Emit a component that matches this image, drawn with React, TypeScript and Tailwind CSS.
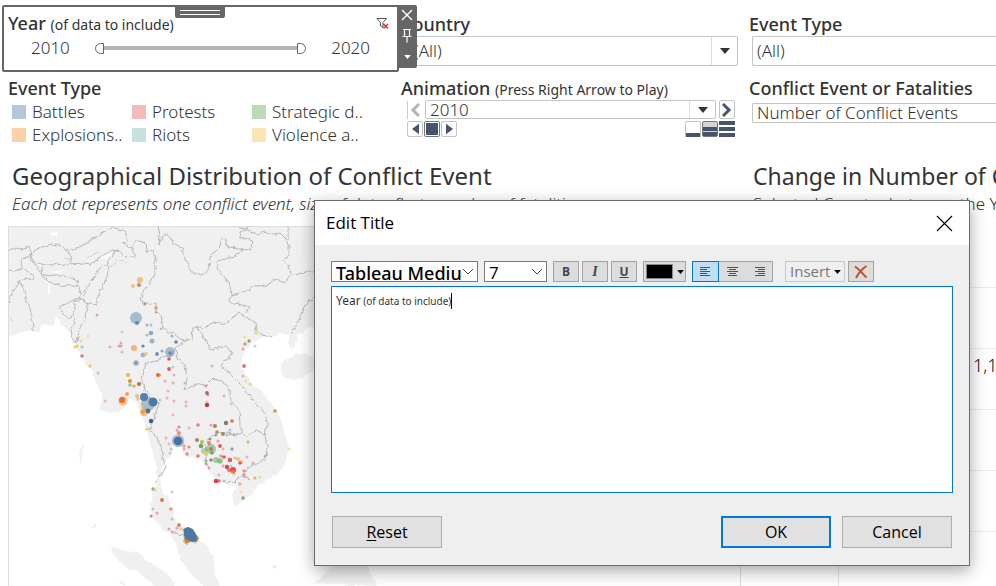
import type { ReactNode } from "react";

const heading = "h-6 font-medium text-[18px] leading-6 text-[#333] whitespace-nowrap";

type Dot = [number, number, number, string, number];

const BLUE = "#4e79a7";
const ORANGE = "#f28e2b";
const RED = "#e15759";
const CRIMSON = "#dd3237";
const TEAL = "#76b7b2";
const GREEN = "#59a14f";
const YELLOW = "#edc948";
const BROWN = "#9c6a2c";
const VERMILION = "#e8622c";

const dots: Dot[] = [
  [136, 318, 6, BLUE, 0.45], [137, 323, 2, BLUE, 0.8], [140, 280, 3, ORANGE, 0.5], [133, 286, 2, ORANGE, 0.5], [139, 285, 2, BROWN, 0.7],
  [145, 304, 1.5, BROWN, 0.6], [156, 308, 1.8, ORANGE, 0.8], [156, 312, 1.5, BLUE, 0.4], [97, 315, 1.5, RED, 0.5],
  [147, 325, 1.5, BLUE, 0.5], [151, 325, 1.5, BLUE, 0.4], [151, 333, 2.3, BLUE, 0.6], [147, 335, 1.6, GREEN, 0.5], [152, 341, 2.5, BLUE, 0.5],
  [161, 329, 1.3, GREEN, 0.5], [172, 336, 1.5, BLUE, 0.5], [176, 342, 1.8, BLUE, 0.9], [170, 352, 5, BLUE, 0.45], [170, 353, 1.7, BLUE, 0.8],
  [162, 351, 1.6, BLUE, 0.6], [157, 354, 1.9, BLUE, 0.8], [143, 346, 1.6, BLUE, 0.9], [143, 355, 2.4, BLUE, 0.5], [146, 354, 1.9, YELLOW, 0.7],
  [136, 363, 2.8, BLUE, 0.5], [136, 363, 1.5, "#8a7c78", 0.5], [134, 348, 3, ORANGE, 0.6], [122, 332, 1.6, ORANGE, 0.4], [110, 347, 1.6, RED, 0.4],
  [119, 346, 1.6, RED, 0.5], [121, 343, 1.5, RED, 0.5], [121, 346, 1.5, RED, 0.5], [122, 352, 1.6, RED, 0.4],
  [75, 347, 1.8, YELLOW, 0.8], [77, 346, 1.6, YELLOW, 0.8], [82, 347, 1.6, BLUE, 0.4], [88, 336, 1.5, YELLOW, 0.5], [81, 341, 1.5, YELLOW, 0.5],
  [82, 356, 1.8, "#a05577", 0.7], [90, 366, 1.7, YELLOW, 0.8], [98, 373, 1.5, RED, 0.4], [169, 359, 1.8, CRIMSON, 0.8], [173, 367, 1.5, TEAL, 0.5],
  [169, 369, 1.9, CRIMSON, 0.8], [174, 375, 1.5, RED, 0.4], [158, 375, 2, VERMILION, 1], [160, 375, 1.5, ORANGE, 0.7], [165, 381, 1.5, RED, 0.4],
  [173, 383, 1.6, RED, 0.4], [185, 383, 1.6, RED, 0.4], [128, 375, 2, "#e8a020", 0.8], [130, 381, 2, "#d08a18", 0.9], [130, 385, 1.7, GREEN, 0.6],
  [134, 386, 1.6, ORANGE, 0.8], [139, 384, 2, BROWN, 0.9], [127, 394, 2, ORANGE, 0.8], [123, 401, 4.5, ORANGE, 0.5], [122, 400, 3, VERMILION, 0.9],
  [105, 401, 1.5, RED, 0.4], [137, 396, 2, ORANGE, 0.5], [138, 399, 1.7, ORANGE, 0.5], [148, 404, 7, BLUE, 0.45], [144, 397, 4, BLUE, 0.95],
  [153, 402, 4.5, BLUE, 1], [144, 412, 4.3, ORANGE, 0.5], [143, 412, 2, ORANGE, 0.8], [148, 411, 2.4, "#47658f", 0.9], [142, 406, 1.5, YELLOW, 0.7],
  [151, 421, 2.2, "#33639b", 1], [160, 400, 1.5, GREEN, 0.4], [147, 429, 1.6, YELLOW, 0.9], [168, 391, 1.5, RED, 0.4], [167, 398, 1.5, RED, 0.4],
  [174, 401, 1.5, RED, 0.4], [186, 402, 1.5, RED, 0.4], [186, 406, 1.5, RED, 0.4], [173, 415, 1.5, RED, 0.4], [206, 386, 1.5, RED, 0.5],
  [207, 393, 1.9, "#8c5c6a", 0.9], [208, 395, 1.6, RED, 0.5], [207, 402, 1.6, ORANGE, 0.4], [207, 405, 2.2, "#bd2944", 0.95], [224, 396, 1.5, RED, 0.4],
  [212, 366, 1.6, GREEN, 0.4], [231, 404, 1.4, TEAL, 0.5], [198, 425, 1.8, RED, 0.7], [189, 428, 1.5, RED, 0.4], [179, 427, 1.6, "#a35c5c", 0.6],
  [177, 430, 1.5, RED, 0.5], [179, 433, 2, VERMILION, 0.7], [166, 438, 1.5, RED, 0.4], [178, 441, 6.2, BLUE, 0.45], [178, 441, 4.3, "#4472a5", 1],
  [169, 444, 1.5, RED, 0.4], [171, 449, 1.5, RED, 0.4], [170, 453, 1.5, TEAL, 0.5], [184, 446, 1.7, RED, 0.5], [184, 449, 1.5, RED, 0.5], [189, 447, 1.6, RED, 0.7],
  [187, 454, 1.7, RED, 0.7], [198, 456, 1.8, VERMILION, 0.8], [197, 440, 2, BROWN, 0.8], [202, 442, 2, "#a9a92c", 0.8], [201, 446, 2.3, GREEN, 0.9],
  [204, 451, 3, GREEN, 0.4], [211, 449, 5, GREEN, 0.5], [211, 449, 2, "#bc6547", 0.8], [212, 453, 1.8, GREEN, 0.8], [209, 443, 2, CRIMSON, 0.6],
  [206, 454, 1.9, YELLOW, 0.9], [211, 460, 1.7, "#6a6a7a", 0.8], [216, 460, 3, GREEN, 0.5], [220, 461, 2.8, GREEN, 0.6], [206, 461, 1.7, GREEN, 0.5],
  [220, 446, 1.9, CRIMSON, 0.8], [218, 441, 1.6, RED, 0.5], [223, 449, 1.5, RED, 0.4], [210, 439, 1.6, BROWN, 0.7], [216, 435, 1.5, BLUE, 0.5],
  [211, 425, 1.6, RED, 0.5], [215, 426, 2, BROWN, 0.8], [217, 432, 1.8, BROWN, 0.7], [223, 434, 1.9, "#ab7520", 0.9], [227, 435, 1.4, BLUE, 0.4],
  [230, 434, 1.4, BLUE, 0.4], [234, 435, 1.4, GREEN, 0.4], [230, 430, 1.5, BLUE, 0.4], [226, 423, 2.2, "#756e62", 0.9], [232, 421, 1.8, "#c7532a", 0.8],
  [248, 442, 1.7, "#a4a83a", 0.6], [232, 449, 1.7, "#4e8e88", 0.7], [224, 457, 1.8, CRIMSON, 0.8], [230, 460, 2.2, CRIMSON, 0.8], [221, 456, 1.6, RED, 0.6],
  [235, 458, 1.5, RED, 0.4], [238, 459, 2, ORANGE, 0.5], [241, 462, 2.3, ORANGE, 0.4], [240, 463, 1.8, "#c84a36", 0.8], [247, 457, 1.5, RED, 0.4],
  [253, 463, 1.5, RED, 0.4], [227, 467, 2.2, CRIMSON, 0.9], [233, 470, 3, CRIMSON, 0.85], [229, 470, 2, RED, 0.8], [233, 472, 2, ORANGE, 0.6],
  [231, 466, 1.5, TEAL, 0.5], [223, 466, 1.5, RED, 0.5], [244, 471, 1.7, RED, 0.6], [244, 475, 1.6, VERMILION, 0.6], [234, 474, 1.5, RED, 0.4],
  [219, 475, 1.5, GREEN, 0.4], [216, 481, 2.2, CRIMSON, 0.95], [219, 481, 1.7, CRIMSON, 0.7], [224, 481, 1.5, GREEN, 0.5], [240, 484, 1.7, ORANGE, 0.6],
  [255, 478, 1.6, ORANGE, 0.7], [260, 477, 1.5, YELLOW, 0.5], [241, 492, 1.5, YELLOW, 0.5], [243, 498, 1.7, GREEN, 0.8], [265, 456, 1.5, RED, 0.5],
  [206, 464, 1.5, RED, 0.5], [209, 468, 1.5, RED, 0.5], [275, 411, 1.8, "#b87f48", 0.8], [289, 449, 1.6, YELLOW, 0.5],
  [245, 337, 1.5, YELLOW, 0.5], [256, 333, 1.6, YELLOW, 0.8], [249, 341, 1.7, BROWN, 0.7], [245, 344, 1.8, "#8b9640", 0.7], [243, 349, 1.5, RED, 0.5],
  [255, 346, 1.5, GREEN, 0.4], [244, 366, 1.9, CRIMSON, 0.7], [243, 376, 1.5, RED, 0.4], [246, 381, 1.5, YELLOW, 0.5], [250, 384, 1.6, YELLOW, 0.7],
  [153, 489, 1.7, "#71815c", 0.7], [155, 490, 2, YELLOW, 0.4], [162, 500, 1.9, VERMILION, 0.9], [172, 492, 1.5, RED, 0.4], [171, 509, 1.7, VERMILION, 0.7],
  [153, 509, 1.5, RED, 0.4], [151, 516, 1.6, RED, 0.7], [157, 513, 1.5, RED, 0.5], [172, 519, 1.5, RED, 0.4], [179, 525, 1.9, "#c46c40", 0.8],
  [177, 528, 1.6, RED, 0.5], [169, 529, 1.5, RED, 0.5], [172, 532, 1.5, RED, 0.5], [181, 529, 1.7, ORANGE, 0.4],
];

const land = [
  "M8 226H740V345L700 352L650 348L600 344L560 342L500 340L400 332L330 322L314 325L305 330L298 335L296 345L291 350L288 342L290 335L280 333L272 337L262 337L253 342L246 350L241 360L242 368L249 378L255 386L266 396L273 406L279 414L283 428L287 440L288 450L285 464L279 472L268 480L257 486L252 496L243 501L234 506L232 494L237 487L228 484L218 480L210 473L205 464L200 459L191 457L186 458L182 447L174 445L172 455L165 461L160 473L161 486L163 492L169 498L172 512L178 524L188 528L197 538L206 545L213 557L215 574L219 586H204L190 573L181 561L177 546L170 534L158 524L151 515L151 502L154 488L158 481L156 464L152 450L147 432L142 414L137 402L129 398L122 410L112 413L99 410L103 400L99 388L93 374L84 360L78 352L74 342L70 332L62 325L56 315L53 326L43 324L40 331L25 331L14 335L8 337Z",
  "M281 363L290 356L304 353L314 358V370L303 377L293 381L282 376Z",
  "M111 546L120 549L128 552L137 551L146 560L158 568L167 573L172 580L175 586H157L147 580L139 572L127 568L119 560L113 553Z",
  "M81 446l2 -2l-1 15l-3 9zM76 479l1 0l0 3l-1 -1zM93 525h2v3h-2zM272 566l3 -2l2 4l-3 2zM118 580l4 1l5 5h-4zM314 583l25 -22l28 4l10 21z",
];

const borders = [
  "M8 250L16 248L22 250L29 246L31 252L28 257L21 260L22 268L29 272L34 277L33 280L26 278L20 281L24 290L25 298L30 307L32 317L33 330",
  "M8 270L15 271L22 268M31 257L35 250L42 247L52 244L64 247L70 255L71 262L66 264L46 265L34 262L31 257",
  "M70 250L78 248L87 243L94 238L102 233L111 228L120 229L126 233L127 241L123 244L132 248L135 242L141 240L146 245L148 252L153 250L155 259L155 270L152 280L147 286L143 291L141 297L143 304L150 304L156 303L156 310L161 315L162 323L166 331L173 333L179 338L186 341L192 338L193 328L197 325L203 330L209 324L219 322L226 324L231 318L239 313L246 318L255 322L256 330L262 335L272 337",
  "M71 264L82 263L93 264L100 257L112 250L120 251L125 257L131 256L134 259L136 254L132 248M118 249L112 256L107 262L109 272L104 284L97 299L97 305L84 302L85 291L93 279L101 268L108 263",
  "M43 266L42 277L53 284L69 286L78 286L81 293L78 298L69 302L60 306L63 314L71 319L74 310L74 301L82 299L88 304L86 318L79 331L77 342L73 341L71 329L75 319",
  "M43 276L57 275L69 277L78 281L76 286M31 250L30 259L36 266L43 276M20 281L15 289L9 298L8 307",
  "M158 226L160 235L159 245L163 236L168 234L173 243L183 248L185 259L189 267L194 274L204 274L209 270L210 257L218 249L221 239L226 239L227 248L240 249L250 250L253 242L249 238L241 239L240 232L248 228",
  "M239 226L250 231L257 234L265 232L272 235L279 233L286 240L289 247L289 256L283 260L289 266L291 274L285 283L275 279L267 285L254 286L249 290L240 293L231 295L228 282L219 270L217 262L225 258L235 256L242 249M288 240L288 226M290 276L298 274L307 272L314 271M314 297L306 305L301 315L296 325L292 333M231 295L230 302L238 304L249 307L246 313",
  "M186 341L181 344L176 348L173 354L165 357L156 361L146 363L144 371L141 379L144 387L149 396L158 405L155 415L153 421L149 430L156 436L161 446L162 455L166 466L160 475L155 484",
  "M176 348L177 359L185 365L187 378L185 391L190 387L197 383L205 386L212 379L222 381L230 390L231 401L240 411L241 424L241 433L236 435L229 432L217 433L208 438L205 445L207 455L206 464L210 470",
  "M197 325L202 334L207 343L211 350L217 348L227 347L232 352L231 357L223 362L221 367L230 373L239 382L246 391L254 402L265 412L267 424L265 435L267 447L266 459L256 464L248 468L244 475L250 479L240 476L234 482L227 483",
  "M241 433L248 437L256 430L265 434M173 531L178 534L183 535L186 544L192 541L196 544",
];

const paleBorders = [
  "M70 250L76 250L80 245L90 243L94 238M8 317L14 321M64 258L70 259M111 266L119 259L127 264M87 258L100 251",
];

function MapView() {
  return (
    <svg viewBox="9 227 731 359" className="block h-full w-full" preserveAspectRatio="xMinYMin slice" role="img" aria-label="Map of conflict events">
      <defs>
        <filter id="relief" x="0" y="0" width="100%" height="100%">
          <feTurbulence type="fractalNoise" baseFrequency="0.035" numOctaves="3" seed="4" result="n" />
          <feColorMatrix in="n" type="matrix" values="0 0 0 0 0.85  0 0 0 0 0.85  0 0 0 0 0.85  1.2 0 0 0 -0.4" result="t" />
          <feComposite in="t" in2="SourceGraphic" operator="in" />
        </filter>
        <filter id="coast">
          <feTurbulence type="fractalNoise" baseFrequency="0.18" numOctaves="2" seed="8" />
          <feDisplacementMap in="SourceGraphic" scale="5" xChannelSelector="R" yChannelSelector="G" />
        </filter>
      </defs>
      <g filter="url(#coast)">
        {land.map((d) => <path key={d} d={d} fill="#f0f0f0" />)}
      </g>
      <g filter="url(#relief)" opacity="0.5">
        {land.map((d) => <path key={d} d={d} fill="#efefef" />)}
      </g>
      <path d="M48 284l2 0l0 10l-2 -1zM50 233l7 -1l1 3l-6 1zM100 258l8 -4l5 0l-9 5zM52 272l12 -2l-6 3z" fill="#fff" />
      <g filter="url(#coast)" fill="none">
        {borders.map((d) => <path key={d} d={d} stroke="#b0b0b0" strokeWidth="0.9" />)}
        {paleBorders.map((d) => <path key={d} d={d} stroke="#ccc" strokeWidth="0.8" />)}
      </g>
      {dots.map(([x, y, r, fill, opacity], i) => <circle key={i} cx={x} cy={y} r={r} fill={fill} opacity={opacity} />)}
      <path d="M183 529L188 527L193 529L196 534L199 538L197 542L190 542L185 544L184 536Z" fill="#c98c2c" />
      <path d="M184 529L188 527L192 529L195 533L197 538L196 542L191 541L186 539L184 535Z" fill="#4878a8" />
    </svg>
  );
}

function Caret({ className = "" }: { className?: string }) {
  return (
    <svg viewBox="0 0 10 6" className={className} aria-hidden="true">
      <path d="M0 0H10L5 6Z" fill="currentColor" />
    </svg>
  );
}

function DropDown({ label, value, boxClass, textClass, open = false }: { label: string; value: string; boxClass: string; textClass: string; open?: boolean }) {
  return (
    <div className={`relative rounded-[2px] border border-[#c4c4c4] bg-white text-[#333] ${open ? "rounded-r-none border-r-0" : ""} ${boxClass}`}>
      <select aria-label={label} className={`block h-full w-full appearance-none bg-transparent font-light outline-none ${textClass}`}>
        <option>{value}</option>
      </select>
      {!open && (
        <span className="pointer-events-none absolute inset-y-0 right-0 flex w-[26px] items-center justify-center border-l border-[#ddd] text-[#333]">
          <Caret className="h-[6px] w-[10px]" />
        </span>
      )}
    </div>
  );
}

const thumb =
  "pointer-events-none absolute inset-x-0 top-0 h-3 w-full appearance-none bg-transparent [&::-webkit-slider-thumb]:pointer-events-auto [&::-webkit-slider-thumb]:h-[11px] [&::-webkit-slider-thumb]:w-[9px] [&::-webkit-slider-thumb]:appearance-none [&::-webkit-slider-thumb]:border [&::-webkit-slider-thumb]:border-[#666] [&::-webkit-slider-thumb]:bg-white";

function YearFilter() {
  return (
    <section className="relative mr-px ml-[2px] h-[67px] rounded-[2px] border-2 border-[#666] bg-white">
      <span className="absolute -top-px left-[171px] flex h-[12px] w-[50px] flex-col justify-center gap-[3px] rounded-b-[2px] bg-[#666] px-[5px]">
        <span className="h-px bg-white" />
        <span className="h-px bg-white" />
      </span>
      <div className="flex items-center justify-between pt-1 pr-2 pl-1">
        <h2 className={heading}>
          Year <span className="text-[14px] font-normal">(of data to include)</span>
        </h2>
        <button aria-label="Clear filter">
          <svg viewBox="0 0 13 13" className="size-[13px]" fill="none" aria-hidden="true">
            <path d="M1 1.500H10.500L7 5.500V10.500L4.500 9V5.500Z" stroke="#555" />
            <path d="M7.500 7L12 11.500M12 7L7.500 11.500" stroke="#d22" strokeWidth="1.300" />
          </svg>
        </button>
      </div>
      <div className="flex h-[26px] items-center gap-[25px] pr-[27px] pl-[27px] text-[17px] font-light text-[#333]">
        <span>2010</span>
        <div className="relative h-3 flex-1">
          <span className="absolute inset-x-[5px] top-1 h-1 bg-[#b3b3b3]" />
          <input type="range" aria-label="First year" min={2010} max={2020} defaultValue={2010} className={`${thumb} [&::-webkit-slider-thumb]:rounded-l-full`} />
          <input type="range" aria-label="Last year" min={2010} max={2020} defaultValue={2020} className={`${thumb} [&::-webkit-slider-thumb]:rounded-r-full`} />
        </div>
        <span>2020</span>
      </div>
      <div className="absolute -top-[2px] -right-[20px] z-10 flex h-[63px] w-5 flex-col items-center rounded-r-[2px] bg-[#666] text-white">
        <button aria-label="Remove" className="flex h-[19px] items-center">
          <svg viewBox="0 0 12 12" className="size-3" stroke="currentColor" strokeWidth="1.400" aria-hidden="true"><path d="M1 1L11 11M11 1L1 11" /></svg>
        </button>
        <button aria-label="Pin" className="flex h-[23px] items-center">
          <svg viewBox="0 0 12 15" className="h-[15px] w-3" fill="none" stroke="currentColor" strokeWidth="1.200" aria-hidden="true"><path d="M2 1.500H10M3.500 1.500V8M8.500 1.500V8M1.500 8.500H10.500M6 8.500V14.500" /></svg>
        </button>
        <button aria-label="More options" className="flex h-[19px] items-center"><Caret className="h-1 w-[7px]" /></button>
      </div>
    </section>
  );
}

const legend = [
  ["Battles", "bg-[#b6c7dc]"],
  ["Protests", "bg-[#f3babc]"],
  ["Strategic d..", "bg-[#bbdab8]"],
  ["Explosions..", "bg-[#fbd1a8]"],
  ["Riots", "bg-[#c7e2de]"],
  ["Violence a..", "bg-[#f8e7b3]"],
];

const navButton = "flex size-[16px] items-center justify-center rounded-[2px] border border-[#c4c4c4] bg-white text-[#46556b]";

function Animation() {
  return (
    <section className="pt-1">
      <h2 className={heading}>
        Animation <span className="text-[14px] font-normal">(Press Right Arrow to Play)</span>
      </h2>
      <div className="flex items-center gap-[3px] pr-[3px] pl-[6px]">
        <button aria-label="Previous" className="flex h-[18px] w-[15px] items-center justify-center border-l border-[#ccc] text-[#b3b3b3]">
          <svg viewBox="0 0 10 14" className="h-[14px] w-[10px]" fill="none" stroke="currentColor" strokeWidth="3" aria-hidden="true"><path d="M9 1L3 7L9 13" /></svg>
        </button>
        <DropDown label="Animation year" value="2010" boxClass="h-[19px] flex-1" textClass="pl-1 text-[17px] leading-[17px]" />
        <button aria-label="Next" className="flex h-[19px] w-[16px] items-center justify-center rounded-[2px] border border-[#c4c4c4] text-[#46556b]">
          <svg viewBox="0 0 10 14" className="h-[14px] w-[10px]" fill="none" stroke="currentColor" strokeWidth="3" aria-hidden="true"><path d="M1 1L7 7L1 13" /></svg>
        </button>
      </div>
      <div className="flex justify-between pt-[2px] pr-[3px] pl-[6px]">
        <div className="flex gap-px">
          <button aria-label="Play backwards" className={navButton}><svg viewBox="0 0 8 12" className="h-3 w-[7px]" aria-hidden="true"><path d="M8 0V12L0 6Z" fill="currentColor" /></svg></button>
          <button aria-label="Stop" className={`${navButton} border-[#777]!`}><span className="size-3 bg-[#46556b]" /></button>
          <button aria-label="Play forwards" className={navButton}><svg viewBox="0 0 8 12" className="h-3 w-[7px]" aria-hidden="true"><path d="M0 0V12L8 6Z" fill="currentColor" /></svg></button>
        </div>
        <div className="flex gap-px">
          <button aria-label="Slow" className="flex size-4 flex-col justify-end rounded-t-[2px] border border-b-0 border-[#c4c4c4]"><span className="h-1 w-full bg-[#46556b]" /></button>
          <button aria-label="Normal" className="flex size-4 flex-col justify-end gap-px rounded-[2px] border border-[#777] bg-[#d4d4d4]"><span className="h-1 w-full bg-[#46556b]" /><span className="h-1 w-full bg-[#46556b]" /></button>
          <button aria-label="Fast" className="flex size-4 flex-col justify-between"><span className="h-1 w-full bg-[#46556b]" /><span className="h-1 w-full bg-[#46556b]" /><span className="h-1 w-full bg-[#46556b]" /></button>
        </div>
      </div>
    </section>
  );
}

function ToolButton({ label, className = "", children }: { label: string; className?: string; children: ReactNode }) {
  return (
    <button aria-label={label} className={`flex h-[21px] w-[26px] items-center justify-center border border-[#a3a3a3] bg-[#dcdcdc] text-[#3c4654] ${className}`}>
      {children}
    </button>
  );
}

function AlignIcon({ d }: { d: string }) {
  return <svg viewBox="0 0 11 11" className="size-[11px]" stroke="#46556b" aria-hidden="true"><path d={d} /></svg>;
}

function EditorSelect({ label, value, className, textClass }: { label: string; value: string; className: string; textClass: string }) {
  return (
    <div className={`relative h-[21px] overflow-hidden border border-[#7a7a7a] bg-white ${className}`}>
      <select aria-label={label} className={`block h-[22px] w-full appearance-none bg-transparent pr-4 pl-1 leading-[22px] text-black outline-none ${textClass}`}>
        <option>{value}</option>
      </select>
      <svg viewBox="0 0 12 7" className="pointer-events-none absolute top-[6px] right-[3px] h-[7px] w-3" fill="none" stroke="#444" aria-hidden="true"><path d="M1 1L6 6L11 1" /></svg>
    </div>
  );
}

const dialogButton = "h-8 w-[110px] border text-base text-black";

function EditTitleDialog() {
  return (
    <div
      role="dialog"
      aria-labelledby="dialog-title"
      className="absolute top-[200px] left-[314px] z-20 w-[656px] border border-[#6b6b6b] bg-[#efefef] font-['Open_Sans','Noto_Sans',sans-serif] shadow-[0_5px_16px_rgba(0,0,0,0.35)]"
    >
      <header className="flex h-11 items-center justify-between bg-white pr-4 pl-[11px]">
        <h2 id="dialog-title" className="text-[17px] text-black">Edit Title</h2>
        <button aria-label="Close">
          <svg viewBox="0 0 17 17" className="size-[17px]" stroke="#000" strokeWidth="1.200" aria-hidden="true"><path d="M1 1L16 16M16 1L1 16" /></svg>
        </button>
      </header>
      <div className="px-4 pt-4 pb-[17px]">
        <div className="flex">
          <EditorSelect label="Font" value="Tableau Medium" className="w-[147px]" textClass="font-['Noto_Sans',sans-serif] font-medium text-[18px]" />
          <EditorSelect label="Font size" value="7" className="ml-[6px] w-[63px]" textClass="text-[17px]" />
          <div className="ml-[6px] flex gap-[3px] text-xs font-bold">
            <ToolButton label="Bold">B</ToolButton>
            <ToolButton label="Italic"><i className="font-['Liberation_Serif',serif] text-sm">I</i></ToolButton>
            <ToolButton label="Underline"><u>U</u></ToolButton>
          </div>
          <button aria-label="Text colour" className="ml-[6px] flex h-[21px] w-[43px] items-center justify-between border border-[#a3a3a3] bg-[#dcdcdc] pr-px pl-[2px] text-black">
            <span className="h-[15px] w-[27px] border border-[#888] bg-black" />
            <Caret className="h-1 w-[7px]" />
          </button>
          <div className="ml-[6px] flex">
            <ToolButton label="Align left" className="border-[#0078d7]! bg-[#bfddf5]! w-[27px]!"><AlignIcon d="M0 1.500H10M0 3.500H7M0 5.500H10M0 7.500H7M0 9.500H10" /></ToolButton>
            <ToolButton label="Align centre" className="border-x-0! w-[27px]!"><AlignIcon d="M0 1.500H11M2 3.500H9M0 5.500H11M2 7.500H9M1 9.500H10" /></ToolButton>
            <ToolButton label="Align right" className="border-l-0! w-[27px]!"><AlignIcon d="M1 1.500H11M4 3.500H11M1 5.500H11M4 7.500H11M1 9.500H11" /></ToolButton>
          </div>
          <button className="ml-3 flex h-[21px] w-[60px] items-center justify-between border border-[#c8c8c8] pr-[3px] pl-1 text-[15px] text-[#777]">
            Insert <Caret className="h-1 w-[7px] text-black" />
          </button>
          <ToolButton label="Clear" className="ml-[3px]">
            <svg viewBox="0 0 14 14" className="size-[14px]" fill="none" stroke="#b9502f" strokeWidth="2" aria-hidden="true"><path d="M1 1.500C5 4 9 9 12.500 12.500M12.500 1C8 4 4 9 2 13" /></svg>
          </ToolButton>
        </div>
        <div
          role="textbox"
          aria-multiline="true"
          aria-label="Title text"
          contentEditable
          suppressContentEditableWarning
          className="mt-1 flex h-[207px] items-start border border-[#0078d7] bg-white px-1 pt-[6px] font-['Noto_Sans',sans-serif] text-[#333] outline-none"
        >
          <p className="border-r border-black text-[10px] leading-4"><span className="text-[12px]">Year</span> (of data to include)</p>
        </div>
        <div className="flex gap-[11px] px-px pt-[23px]">
          <button className={`${dialogButton} mr-auto border-[#adadad] bg-[#e1e1e1]`}><u className="underline-offset-2">R</u>eset</button>
          <button className={`${dialogButton} border-2! border-[#0078d7] bg-[#e1e1e1]`}>OK</button>
          <button className={`${dialogButton} border-[#adadad] bg-[#e1e1e1]`}>Cancel</button>
        </div>
      </div>
    </div>
  );
}

export default function App() {
  return (
    <main className="relative flex h-screen flex-col overflow-hidden bg-white font-['Noto_Sans','Open_Sans',sans-serif] text-[#333]">
      <div className="grid grid-cols-[400fr_348fr_248fr] pt-[5px]">
        <div className="min-w-0">
          <YearFilter />
          <section className="pt-1 pl-2">
            <h2 className={heading}>Event Type</h2>
            <ul className="grid grid-cols-[120px_120px_1fr] pl-1 text-[17px] leading-[23px] font-light text-[#333]">
              {legend.map(([name, color]) => (
                <li key={name} className="flex items-center gap-[6px] whitespace-nowrap">
                  <span className={`size-[14px] ${color}`} />
                  {name}
                </li>
              ))}
            </ul>
          </section>
        </div>
        <div className="min-w-0 pr-[10px] pl-px">
          <section className="h-[67px] pt-[7px]">
            <h2 className={heading}>Country</h2>
            <DropDown label="Country" value="(All)" boxClass="h-[30px]" textClass="pl-3 text-[17px]" />
          </section>
          <Animation />
        </div>
        <div className="min-w-0 pl-px">
          <section className="h-[67px] pt-[7px]">
            <h2 className={heading}>Event Type</h2>
            <DropDown label="Event type" value="(All)" boxClass="ml-[3px] h-[30px]" textClass="pl-1 text-[17px]" open />
          </section>
          <section className="pt-1">
            <h2 className={heading}>Conflict Event or Fatalities</h2>
            <DropDown label="Conflict event or fatalities" value="Number of Conflict Events" boxClass="mt-[3px] ml-[3px] h-5" textClass="pl-1 text-[17px] leading-[18px]" open />
          </section>
        </div>
      </div>
      <div className="grid min-h-0 flex-1 grid-cols-[741fr_255fr] pt-[15px]">
        <section className="flex min-w-0 flex-col pl-2">
          <h1 className="pl-1 text-[24px] leading-[30px] whitespace-nowrap">Geographical Distribution of Conflict Event</h1>
          <p className="h-[35px] pt-px pl-1 text-[17px] leading-6 font-light whitespace-nowrap italic">Each dot represents one conflict event, size of dot reflects number of fatalities</p>
          <div className="min-h-0 flex-1 border border-b-0 border-[#ddd]"><MapView /></div>
        </section>
        <section className="flex min-w-0 flex-col overflow-hidden">
          <h1 className="pl-3 text-[23px] leading-[30px] whitespace-nowrap">Change in Number of Conflict Events</h1>
          <p className="pt-px pl-3 text-[17px] leading-6 font-light whitespace-nowrap">Selected Country between the Years</p>
          <div className="flex h-[307px] flex-col pt-[11px]">
            {[0, 1, 2, 3, 4].map((row) => (
              <div key={row} className="h-[61px] shrink-0 border-b border-[#ececec] pt-1 pl-[232px] text-[18px] leading-6 font-light text-[#111]">{row === 2 ? "1,144" : ""}</div>
            ))}
          </div>
          <div className="ml-[97px] flex-1 border-l border-[#e4e4e4]" />
        </section>
      </div>
      <EditTitleDialog />
    </main>
  );
}
